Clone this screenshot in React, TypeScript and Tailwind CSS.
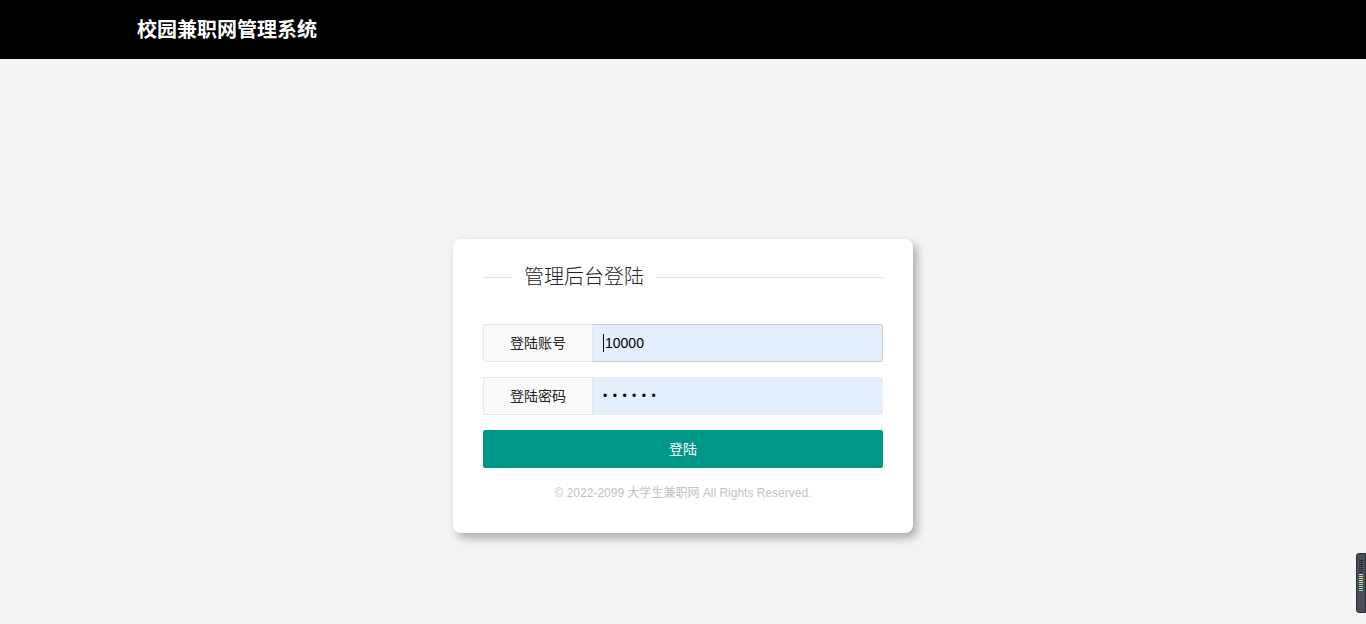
import type React from 'react'

const font = '"Liberation Sans", "Noto Sans CJK SC", sans-serif'

const Field: React.FC<{ label: string; children: React.ReactNode; focused?: boolean }> = ({
	label,
	children,
	focused,
}) => (
	<div className="flex h-[38px]">
		<div className="flex w-[110px] shrink-0 items-center justify-center rounded-l-[2px] border border-[#e6e6e6] bg-[#fafafa] text-[14px] text-[#222]">
			{label}
		</div>
		<div
			className={`flex flex-1 items-center rounded-r-[2px] border border-l-0 bg-[#e4effd] pl-[10px] text-[14px] text-black ${
				focused ? 'border-[#c9c9c9]' : 'border-[#eeeeee]'
			}`}
		>
			{children}
		</div>
	</div>
)

export default function App() {
	return (
		<div className="relative min-h-[624px] bg-[#f4f4f4]" style={{ fontFamily: font }}>
			<header className="flex h-[59px] items-center bg-black pl-[137px]">
				<h1 className="text-[20px] font-bold text-white">校园兼职网管理系统</h1>
			</header>

			<div className="mx-auto mt-[180px] w-[460px] rounded-[8px] bg-white px-[30px] pb-[31px] pt-[24px] shadow-[4px_5px_10px_rgba(0,0,0,0.3)]">
				<div className="flex h-[28px] items-center">
					<div className="h-px w-[30px] bg-[#e2e2e2]" />
					<span className="px-[11px] text-[20px] font-light text-[#222]">管理后台登陆</span>
					<div className="h-px flex-1 bg-[#e2e2e2]" />
				</div>

				<div className="mt-[33px] flex flex-col gap-[15px]">
					<Field label="登陆账号" focused>
						<span className="mr-px inline-block h-[18px] w-px bg-black" />
						10000
					</Field>
					<Field label="登陆密码">
						<span className="text-[12px] tracking-[5.5px]">••••••</span>
					</Field>
					<button className="h-[38px] rounded-[2px] bg-[#009688] text-[14px] text-white">登陆</button>
				</div>

				<p className="mt-[16px] text-center text-[12px] leading-[18px] text-[#c2c2c2]">
					© 2022-2099 大学生兼职网 All Rights Reserved.
				</p>
			</div>

			<div className="absolute right-0 top-[553px] flex h-[60px] w-[10px] flex-col items-center gap-px rounded-l-[3px] border border-[#2c2f36] bg-[#4a4e58] pt-[6px]">
				{Array.from({ length: 16 }).map((_, i) => (
					<div
						key={i}
						className={`h-px w-[4px] ${i < 7 ? 'bg-[#2a2d33]' : i < 12 ? 'bg-[#d8e07a]' : 'bg-[#7fd8b0]'}`}
					/>
				))}
			</div>
		</div>
	)
}
